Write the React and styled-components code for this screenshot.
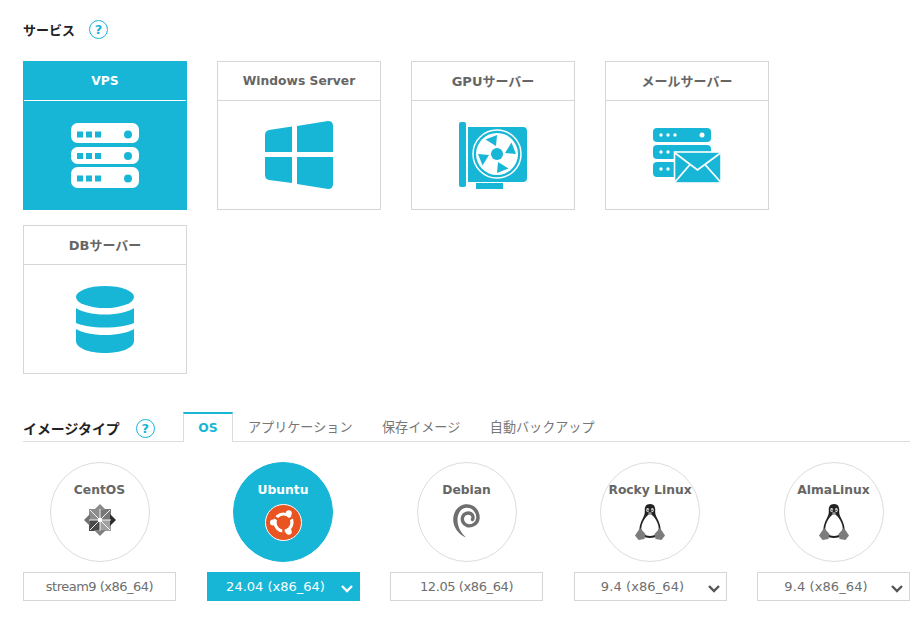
import React from "react";
import styled, { createGlobalStyle } from "styled-components";

const CYAN = "#17b6d7";

const GlobalStyle = createGlobalStyle`
  html, body {
    margin: 0;
    padding: 0;
    background: #fff;
    overflow: hidden;
  }
  body {
    font-family: "DejaVu Sans", "Noto Sans CJK JP", sans-serif;
    font-size: 13px;
    color: #666;
  }
  * {
    box-sizing: border-box;
  }
`;

const Page = styled.div`
  width: 920px;
  height: 625px;
  padding: 19px 10px 0 23px;
`;

const Title = styled.div`
  display: flex;
  align-items: center;
  height: 20px;
  font-weight: bold;
  color: #222;
`;

const Help = styled.span`
  display: inline-flex;
  align-items: center;
  justify-content: center;
  width: 19px;
  height: 19px;
  margin-left: ${(p) => p.$gap}px;
  border: 1.5px solid ${CYAN};
  border-radius: 50%;
  color: ${CYAN};
  font-size: 13px;
  font-weight: bold;
`;

const CardGrid = styled.div`
  display: grid;
  grid-template-columns: repeat(4, 164px);
  grid-auto-rows: 149px;
  column-gap: 30px;
  row-gap: 15px;
  margin-top: 22px;
`;

const Card = styled.div`
  display: flex;
  flex-direction: column;
  border: 1px solid ${(p) => (p.$active ? CYAN : "#d6d6d6")};
  background: ${(p) => (p.$active ? CYAN : "#fff")};
  color: ${(p) => (p.$active ? "#fff" : "#666")};
`;

const CardHead = styled.div`
  display: flex;
  align-items: center;
  justify-content: center;
  height: 39px;
  flex: none;
  padding-bottom: ${(p) => (p.$latin ? 0 : 1)}px;
  border-bottom: 1px solid ${(p) => (p.$active ? "#fff" : "#d6d6d6")};
  font-size: ${(p) => (p.$latin ? 12.3 : 13)}px;
  font-weight: bold;
`;

const CardBody = styled.div`
  flex: 1;
  display: flex;
  align-items: center;
  justify-content: center;
`;

const TabRow = styled.div`
  display: flex;
  align-items: stretch;
  gap: 0.5px;
  height: 30px;
  margin-top: 38px;
  border-bottom: 1px solid #dcdcdc;
`;

const TabTitle = styled(Title)`
  width: 159.5px;
  height: auto;
  padding-top: 3px;
  font-size: 13.9px;
`;

const Tab = styled.div`
  display: flex;
  align-items: center;
  padding: 0 14.5px 2px;
  margin-bottom: -1px;
  color: #777;
  font-size: 13.1px;
`;

const ActiveTab = styled(Tab)`
  width: 50px;
  justify-content: center;
  padding: 0;
  background: #fff;
  color: ${CYAN};
  font-size: 12.3px;
  font-weight: bold;
  border-top: 2px solid ${CYAN};
  border-left: 1px solid #dcdcdc;
  border-right: 1px solid #dcdcdc;
`;

const ImageGrid = styled.div`
  display: grid;
  grid-template-columns: repeat(5, 153px);
  column-gap: 30.5px;
  margin-top: 20px;
`;

const ImageItem = styled.div`
  display: flex;
  flex-direction: column;
  align-items: center;
`;

const Circle = styled.div`
  display: flex;
  flex-direction: column;
  align-items: center;
  width: 100px;
  height: 100px;
  padding-top: 17px;
  border: 1px solid ${(p) => (p.$active ? CYAN : "#dcdcdc")};
  border-radius: 50%;
  background: ${(p) => (p.$active ? CYAN : "#fff")};
  color: ${(p) => (p.$active ? "#fff" : "#666")};
  font-size: 12.3px;
  font-weight: bold;
  line-height: 20px;
  white-space: nowrap;
`;

const Logo = styled.div`
  display: flex;
  justify-content: center;
  align-items: flex-start;
  height: 38px;
  margin-top: 4px;
`;

const Version = styled.div`
  position: relative;
  display: flex;
  align-items: center;
  justify-content: center;
  width: 153px;
  height: 29px;
  margin-top: 10px;
  padding-right: ${(p) => (p.$arrow ? 15 : 0)}px;
  border: 1px solid ${(p) => (p.$active ? CYAN : "#d6d6d6")};
  background: ${(p) => (p.$active ? CYAN : "#fff")};
  color: ${(p) => (p.$active ? "#fff" : "#6e6e6e")};
  letter-spacing: ${(p) => p.$spacing || 0}px;
`;

const Chevron = styled.svg`
  position: absolute;
  right: 5px;
  top: 11px;
`;

const ServerIcon = () => (
  <svg width="68" height="65" viewBox="0 0 68 65">
    {[[0, 20, 11.5], [24, 17, 33], [44, 21, 55.5]].map(([y, h, cy]) => (
      <g key={y}>
        <rect x="0" y={y} width="68" height={h} rx="6.5" fill="#fff" />
        {[6, 15, 24].map((x) => (
          <rect key={x} x={x} y={cy - 3} width="6" height="6" fill={CYAN} />
        ))}
        <circle cx="57" cy={cy} r="4" fill={CYAN} />
      </g>
    ))}
  </svg>
);

const WindowsIcon = () => (
  <svg width="68" height="68" viewBox="0 0 68 68" fill={CYAN}>
    <path d="M0 14Q0 10 4 9L27 5.500V31H0Z" />
    <path d="M32 5L63 0Q68 0 68 5V31H32Z" />
    <path d="M0 36H27V62L4 59Q0 58 0 54Z" />
    <path d="M32 36H68V63Q68 68 63 68L32 63Z" />
  </svg>
);

const GpuIcon = () => (
  <svg width="68" height="67" viewBox="0 0 68 67">
    <rect x="0" y="0" width="7" height="65" rx="2" fill={CYAN} />
    <path d="M9 5H64Q68 5 68 9V56Q68 60 64 60H9Z" fill={CYAN} />
    <rect x="17" y="61" width="27" height="6" fill={CYAN} />
    <circle cx="38" cy="32" r="24" fill="none" stroke="#fff" strokeWidth="1.500" />
    <circle cx="38" cy="32" r="21" fill="#fff" />
    {[0, 90, 180, 270].map((a) => (
      <path key={a} d="M26.500 17.500L38 13L37 24Z" fill={CYAN} transform={`rotate(${a} 38 32)`} />
    ))}
    <circle cx="38" cy="32" r="6" fill={CYAN} />
  </svg>
);

const MailIcon = () => (
  <svg width="68" height="55" viewBox="0 0 68 55">
    {[[0, 14, 7, 3], [17, 14, 24, 2], [34, 15, 41, 2]].map(([y, h, cy, n]) => (
      <g key={y}>
        <rect x="0" y={y} width="58" height={h} rx="4" fill={CYAN} />
        {[8, 15, 22].slice(0, n).map((x) => (
          <circle key={x} cx={x} cy={cy} r="1.700" fill="#fff" />
        ))}
      </g>
    ))}
    <circle cx="49" cy="7" r="2.500" fill="#fff" />
    <rect x="21.500" y="24" width="46.500" height="31" fill={CYAN} stroke="#fff" strokeWidth="1.600" />
    <path d="M22 25L44.500 42L67.500 25M22 54L37 36.500M67.500 54L52 36.500" fill="none" stroke="#fff" strokeWidth="1.800" />
  </svg>
);

const DbIcon = () => (
  <svg width="58" height="67" viewBox="0 0 58 67" fill={CYAN}>
    <ellipse cx="29" cy="11" rx="29" ry="11" />
    <path d="M0 22C6 26 16 28.500 29 28.500C42 28.500 52 26 58 22V37C52 39.500 42 41.500 29 41.500C16 41.500 6 39.500 0 37Z" />
    <path d="M0 43C6 46.500 16 49 29 49C42 49 52 46.500 58 43V55C58 62 45 67 29 67C13 67 0 62 0 55Z" />
  </svg>
);

const CentosIcon = () => (
  <svg width="32" height="32" viewBox="0 0 32 32">
    <path d="M5 5H16V16H5Z" fill="#8d8d8d" />
    <path d="M16 5H27V16H16Z" fill="#777" />
    <path d="M5 16H16V27H5Z" fill="#4a4a4a" />
    <path d="M16 16H27V27H16Z" fill="#a0a0a0" />
    <path d="M16 0L22 6H10Z" fill="#8a8a8a" />
    <path d="M32 16L26 22V10Z" fill="#2e2e2e" />
    <path d="M16 32L10 26H22Z" fill="#808080" />
    <path d="M0 16L6 10V22Z" fill="#707070" />
    <path d="M16 16L6 6M16 16L26 6M16 16L6 26M16 16L26 26M16 5V27M5 16H27" stroke="#fff" strokeWidth=".9" />
    <circle cx="16" cy="16" r="2.200" fill="#fff" />
  </svg>
);

const UbuntuIcon = () => (
  <svg width="37" height="37" viewBox="0 0 37 37">
    <circle cx="18.500" cy="18.500" r="18" fill="#e95420" stroke="#fff" strokeWidth="1" />
    <circle cx="18.500" cy="18.500" r="8.500" fill="none" stroke="#fff" strokeWidth="3.200" />
    {[-90, 30, 150].map((a) => (
      <line key={a} x1="18.500" y1="18.500" x2="30" y2="18.500" stroke="#e95420" strokeWidth="2.500" transform={`rotate(${a + 60} 18.500 18.500)`} />
    ))}
    <circle cx="8" cy="18.500" r="3" fill="#fff" />
    <circle cx="23.800" cy="9.300" r="3" fill="#fff" />
    <circle cx="23.800" cy="27.700" r="3" fill="#fff" />
  </svg>
);

const DebianIcon = () => (
  <svg width="27" height="34" viewBox="0 0 27 34">
    <path d="M13 2C20 1.500 25.200 7 25 14C24.500 19.500 19 23 14 21.500C10 20 8.500 16 9.800 12.500C11 9.500 15 8 18 9.800C20 11 20.500 13.500 19.500 15.500" fill="none" stroke="#6f6f6f" strokeWidth="3.400" strokeLinecap="round" />
    <path d="M13 .3C5 .8 0 8 .2 16C.5 24 6 30.500 13 33.500C8.500 29 4.500 23.500 4.500 16C4.500 9.500 8 4.300 13 3.700Z" fill="#6f6f6f" />
  </svg>
);

const TuxIcon = () => (
  <svg width="30" height="36" viewBox="0 0 30 36">
    <path d="M15 0C10.500 0 9.500 3.500 9.800 7C10 10 9 12 7.500 15C5.800 18 4 23 4.500 27C5 31 9 34 15 34C21 34 25 31 25.500 27C26 23 24.200 18 22.500 15C21 12 20 10 20.200 7C20.500 3.500 19.500 0 15 0Z" fill="#222" />
    <path d="M15 9.500C10.500 12.500 6.300 19 6.300 24.500C6.300 29 10 32 15 32C20 32 23.700 29 23.700 24.500C23.700 19 19.500 12.500 15 9.500Z" fill="#fff" />
    <ellipse cx="12.700" cy="6" rx="1.500" ry="2" fill="#ddd" />
    <ellipse cx="17.300" cy="6" rx="1.500" ry="2" fill="#ddd" />
    <circle cx="13" cy="6.300" r=".7" fill="#111" />
    <circle cx="17" cy="6.300" r=".7" fill="#111" />
    <path d="M12.500 9L15 7.800L17.500 9L15 11Z" fill="#888" />
    <path d="M5 24L10.500 30L9.500 35L3.500 36L0 31.500Z" fill="#7c7c7c" />
    <path d="M25 24L19.500 30L20.500 35L26.500 36L30 31.500Z" fill="#7c7c7c" />
  </svg>
);

const services = [
  { name: "VPS", icon: <ServerIcon />, active: true, latin: true },
  { name: "Windows Server", icon: <WindowsIcon />, latin: true },
  { name: "GPUサーバー", icon: <GpuIcon /> },
  { name: "メールサーバー", icon: <MailIcon /> },
  { name: "DBサーバー", icon: <DbIcon /> },
];

const images = [
  { name: "CentOS", logo: <CentosIcon />, version: "stream9 (x86_64)", spacing: -0.5 },
  { name: "Ubuntu", logo: <UbuntuIcon />, version: "24.04 (x86_64)", arrow: true, active: true },
  { name: "Debian", logo: <DebianIcon />, version: "12.05 (x86_64)", spacing: -0.4 },
  { name: "Rocky Linux", logo: <TuxIcon />, version: "9.4 (x86_64)", arrow: true, spacing: 0.1 },
  { name: "AlmaLinux", logo: <TuxIcon />, version: "9.4 (x86_64)", arrow: true, spacing: 0.1 },
];

const tabs = ["アプリケーション", "保存イメージ", "自動バックアップ"];

export default function App() {
  return (
    <Page>
      <GlobalStyle />
      <Title>
        サービス
        <Help $gap={14}>?</Help>
      </Title>
      <CardGrid>
        {services.map((s) => (
          <Card key={s.name} $active={s.active}>
            <CardHead $active={s.active} $latin={s.latin}>{s.name}</CardHead>
            <CardBody>{s.icon}</CardBody>
          </Card>
        ))}
      </CardGrid>
      <TabRow>
        <TabTitle>
          イメージタイプ
          <Help $gap={16}>?</Help>
        </TabTitle>
        <ActiveTab>OS</ActiveTab>
        {tabs.map((t) => (
          <Tab key={t}>{t}</Tab>
        ))}
      </TabRow>
      <ImageGrid>
        {images.map((img) => (
          <ImageItem key={img.name}>
            <Circle $active={img.active}>
              {img.name}
              <Logo>{img.logo}</Logo>
            </Circle>
            <Version $active={img.active} $arrow={img.arrow} $spacing={img.spacing}>
              {img.version}
              {img.arrow && (
                <Chevron width="14" height="10" viewBox="0 0 14 10" fill="none" stroke={img.active ? "#fff" : "#555"} strokeWidth="2.400">
                  <path d="M2 2L7 7L12 2" />
                </Chevron>
              )}
            </Version>
          </ImageItem>
        ))}
      </ImageGrid>
    </Page>
  );
}
